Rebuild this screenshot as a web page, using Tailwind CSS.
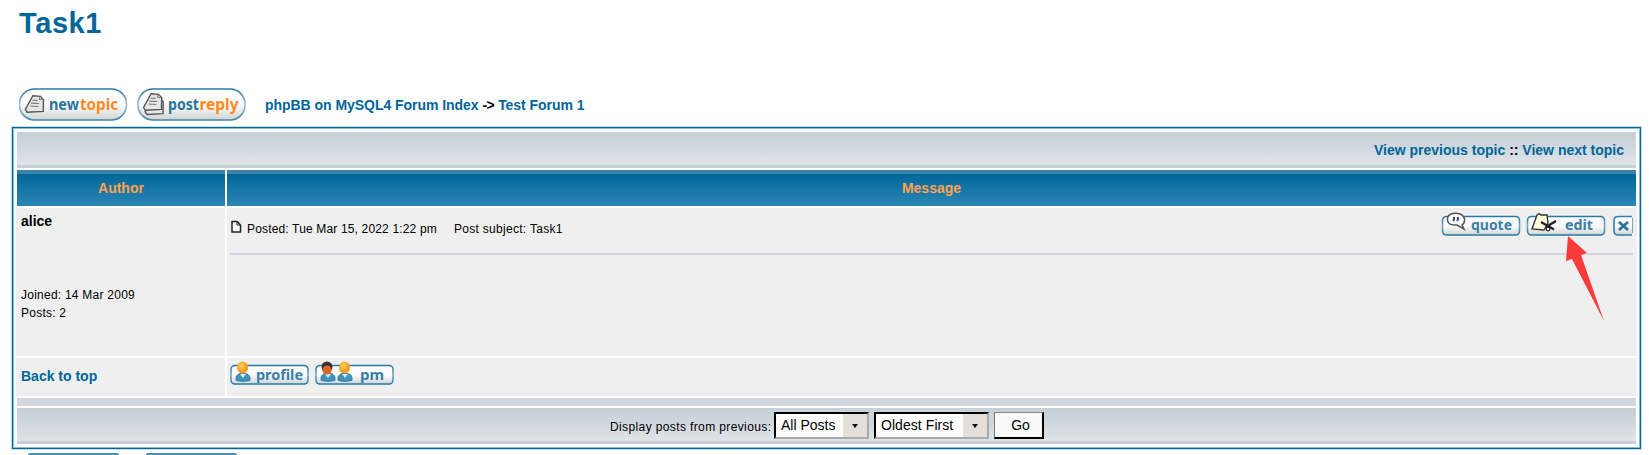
<!DOCTYPE html>
<html lang="en"><head><meta charset="utf-8"><title>Task1</title>
<script src="https://cdn.jsdelivr.net/npm/@tailwindcss/browser@4"></script></head>
<body class="bg-white w-[1649px] h-[455px] overflow-hidden font-['Liberation_Sans',Arial,sans-serif] text-[14px] leading-4 text-black">
<svg width="0" height="0" class="absolute"><defs>
<linearGradient id="g" x1="0" y1="0" x2="0" y2="1"><stop offset="0" stop-color="#fff"/><stop offset=".55" stop-color="#f8f8f8"/><stop offset="1" stop-color="#d0d4d6"/></linearGradient>
<linearGradient id="bd" x1="0" y1="0" x2="0" y2="1"><stop offset="0" stop-color="#2579a2"/><stop offset=".5" stop-color="#75a9c2"/><stop offset="1" stop-color="#2579a2"/></linearGradient>
<linearGradient id="pill" x1="0" y1="0" x2="0" y2="1"><stop offset="0" stop-color="#2579a2"/><stop offset=".5" stop-color="#a9bfca"/><stop offset="1" stop-color="#3d87ab"/></linearGradient>
<radialGradient id="or" cx=".4" cy=".35"><stop offset="0" stop-color="#ffd45e"/><stop offset="1" stop-color="#f39a1c"/></radialGradient>
<g id="page"><path d="M6 1L13.500 .8L17 4L18 15.500L2 18L0 15.500Z" fill="#e6e6e6" stroke="#555" stroke-width="1.400"/><path d="M13 1v3h3M6 5.500l5-.4M5 8.500l8-.4M4.500 11.500l8-.3" fill="none" stroke="#777" stroke-width="1.1"/></g>
<g id="user"><path d="M1 19.5Q0 14 5 12.5L11 12.5Q16 14 15 19.5Q8 21.5 1 19.5Z" fill="#3e93bd" stroke="#28708f" stroke-width=".7"/><path d="M5 13l3 4l3-4z" fill="#d9edf6"/></g>
</defs></svg>
<header class="h-[88px] pl-[19px] pt-[5px]"><h1 class="text-[29px] leading-9 font-bold text-[#006699] tracking-[0.6px]">Task1</h1></header>
<nav class="h-[39px] pl-[18px] flex items-start">
<svg width="110" height="34" viewBox="0 0 110 34"><rect x="1.500" y="1" width="107" height="31" rx="15" fill="url(#g)" stroke="url(#pill)" stroke-width="1.600"/><g transform="rotate(6 17 16)"><use href="#page" x="8" y="7"/></g><g font-family="Noto Sans" font-weight="700" font-size="15.500"><text x="31" y="21.500" textLength="30" lengthAdjust="spacingAndGlyphs" fill="#2a749c">new</text><text x="62" y="21.500" textLength="38" lengthAdjust="spacingAndGlyphs" fill="#ff8a1c">topic</text></g></svg>
<svg class="ml-2" width="112" height="34" viewBox="0 0 112 34"><rect x="2" y="1" width="107" height="31" rx="15" fill="url(#g)" stroke="url(#pill)" stroke-width="1.600"/><g transform="rotate(6 17 16)"><use href="#page" x="10" y="9"/><use href="#page" x="8" y="5"/></g><g font-family="Noto Sans" font-weight="700" font-size="15.500"><text x="32" y="21.500" textLength="31" lengthAdjust="spacingAndGlyphs" fill="#2a749c">post</text><text x="63.500" y="21.500" textLength="39" lengthAdjust="spacingAndGlyphs" fill="#ff8a1c">reply</text></g></svg>
<div class="ml-[17px] mt-[9px] font-bold text-[#006699] tracking-[-0.04px] whitespace-nowrap">phpBB on MySQL4 Forum Index <span class="text-black tracking-[-0.5px]">-&gt;</span> Test Forum 1</div>
</nav>
<main class="ml-3 w-[1629px] h-[322px] border border-[#006699] inset-ring inset-ring-[#8dbdd4] outline outline-[#c5dfeb] pt-[4px] px-[3px] flex flex-col gap-[2px]">
<div class="h-[36px] mx-px bg-linear-to-b from-[#c7d0d7] via-[#d1d8df] to-[#dfe4e8] border-b-[3px] border-[#c8d0d7] flex justify-end pr-[12px] pt-[10px] font-bold text-[#006699]"><span>View previous topic <span class="text-black">::</span> View next topic</span></div>
<div class="h-[36px] mx-px flex gap-[2px] font-bold text-[#ffa34f]"><div class="w-[208px] bg-linear-to-b from-[#006699] to-[#2987b5] border-t-4 border-[#3b82a8] text-center pt-[6px]">Author</div><div class="flex-1 bg-linear-to-b from-[#006699] to-[#2987b5] border-t-4 border-[#3b82a8] text-center pt-[6px]">Message</div></div>
<div class="h-[148px] flex gap-[2px]"><div class="w-[209px] bg-[#efefef] pl-[5px] pt-[5px]"><div class="font-bold">alice</div><div class="mt-[57px] text-[12px] leading-[18px] tracking-[0.24px]">Joined: 14 Mar 2009<br>Posts: 2</div></div>
<div class="flex-1 bg-[#efefef] pr-1 pl-[3px]"><div class="h-[47px] border-b-2 border-[#d1d7dc] flex items-start justify-between"><div class="flex pt-[12px] text-[12px] leading-[18px] tracking-[0.16px]"><svg width="12" height="14"><path d="M2 1.500H7L10.500 5V12H2Z" fill="#fff" stroke="#222" stroke-width="1.500"/><path d="M7 1.500V5H10.500" fill="none" stroke="#222"/></svg><span class="ml-[5px]">Posted: Tue Mar 15, 2022 1:22 pm</span><span class="ml-[17px] tracking-[0.3px]">Post subject: Task1</span></div>
<div class="flex pt-[3px]">
<svg width="85" height="26"><rect x="1.500" y="5.500" width="77" height="18.500" rx="4" fill="url(#g)" stroke="url(#bd)" stroke-width="1.600"/><path d="M10 3Q6 5 6.500 9Q7 14 13 14H16L23 18L21 14Q24 12 23.500 8Q22 3 17 2.500Q13 2 10 3Z" fill="#fff" stroke="#555" stroke-width="1.500"/><path d="M13 6v2.500l-1 1.500M17 6v2.500l-1 1.500" fill="none" stroke="#40409b" stroke-width="2"/><text x="30" y="19" textLength="41" lengthAdjust="spacingAndGlyphs" font-family="Noto Sans" font-weight="700" font-size="14" fill="#3880a5">quote</text></svg>
<svg width="86" height="26"><rect x="1.500" y="5.500" width="77" height="18.500" rx="4" fill="url(#g)" stroke="url(#bd)" stroke-width="1.600"/><path d="M11 4L13 2.500L15 4L21 4L22 12L18 19L6 18Z" fill="#ffffe0" stroke="#333" stroke-width="1.400"/><path d="M15 11L28 18.500M20 16L30 10" stroke="#222" stroke-width="2.200"/><circle cx="22" cy="18" r="1.800" fill="none" stroke="#222" stroke-width="1.200"/><text x="39" y="19" textLength="28" lengthAdjust="spacingAndGlyphs" font-family="Noto Sans" font-weight="700" font-size="14" fill="#3880a5">edit</text></svg>
<svg width="21" height="26"><path d="M20 5.500H6Q2 5.500 2 9.500V20Q2 24 6 24H20" fill="url(#g)" stroke="#2f7fa7" stroke-width="1.600"/><path d="M20.500 7V22" stroke="#75a9c2"/><path d="M7 11L16 19M16 11L7 19" stroke="#2b769d" stroke-width="2.800"/></svg>
</div></div></div></div>
<div class="h-[38px] flex gap-[2px]"><div class="w-[209px] bg-[#efefef] pl-[5px] pt-[10px] font-bold text-[#006699]">Back to top</div><div class="flex-1 bg-[#efefef] px-[3px] pt-[3px] flex">
<svg width="85" height="26"><rect x="1" y="4.500" width="77" height="18.500" rx="4" fill="url(#g)" stroke="url(#bd)" stroke-width="1.600"/><use href="#user" x="5"/><ellipse cx="12.500" cy="6.500" rx="5.500" ry="6" fill="url(#or)"/><text x="26" y="18.500" textLength="47" lengthAdjust="spacingAndGlyphs" font-family="Noto Sans" font-weight="700" font-size="14.500" fill="#3880a5">profile</text></svg>
<svg width="86" height="26"><rect x="1" y="4.500" width="77" height="18.500" rx="4" fill="url(#g)" stroke="url(#bd)" stroke-width="1.600"/><use href="#user" x="5"/><ellipse cx="12" cy="6" rx="5.500" ry="5.500" fill="#333"/><ellipse cx="12" cy="9" rx="4.500" ry="4.500" fill="#df6427"/><use href="#user" x="22"/><ellipse cx="29.500" cy="6.500" rx="5.500" ry="6" fill="url(#or)"/><text x="45" y="18.500" textLength="24" lengthAdjust="spacingAndGlyphs" font-family="Noto Sans" font-weight="700" font-size="14.500" fill="#3880a5">pm</text></svg>
</div></div>
<div class="h-[8px] mx-px bg-[#d1d7dc]"></div>
<div class="h-[36px] mx-px bg-linear-to-b from-[#c7d0d7] via-[#d1d8df] to-[#dfe4e8] border-b-[3px] border-[#c8d0d7] flex items-start pl-[593px] pt-[4px]"><span class="w-[164px] pt-[7px] text-[12px] tracking-[0.38px] whitespace-nowrap">Display posts from previous:</span>
<div class="w-[95px] h-[27px] bg-white border-2 border-t-black border-l-black border-r-[#aaa] border-b-[#aaa] flex"><span class="flex-1 pl-[5px] pt-[3px]">All Posts</span><span class="w-[24px] bg-[#e5dfda] grid place-items-center"><svg width="6" height="4"><path d="M0 0h6L3 4z"/></svg></span></div>
<div class="ml-[5px] w-[115px] h-[27px] bg-white border-2 border-t-black border-l-black border-r-[#aaa] border-b-[#aaa] flex"><span class="flex-1 pl-[5px] pt-[3px] tracking-[0.06px] whitespace-nowrap">Oldest First</span><span class="w-[24px] bg-[#e5dfda] grid place-items-center"><svg width="6" height="4"><path d="M0 0h6L3 4z"/></svg></span></div>
<button class="ml-[5px] w-[50px] h-[27px] bg-[#fafafa] border border-r-2 border-b-2 border-t-[#888] border-l-[#777] border-r-black border-b-black pl-1">Go</button></div>
</main>
<!-- Tops of the lower action buttons, cut by the viewport -->
<div class="h-[6px] pt-[4px] pl-[28px] flex gap-[27px] overflow-hidden"><div class="w-[91px] h-[2px] rounded-t-full bg-[#4a90b3]"></div><div class="w-[91px] h-[2px] rounded-t-full bg-[#4a90b3]"></div></div>
<svg class="absolute left-[1565px] top-[235px]" width="42" height="90"><path d="M3 1L22 18L16 20L39 86L7 24L1 26Z" fill="#fd3a3a"/></svg>
</body></html>
